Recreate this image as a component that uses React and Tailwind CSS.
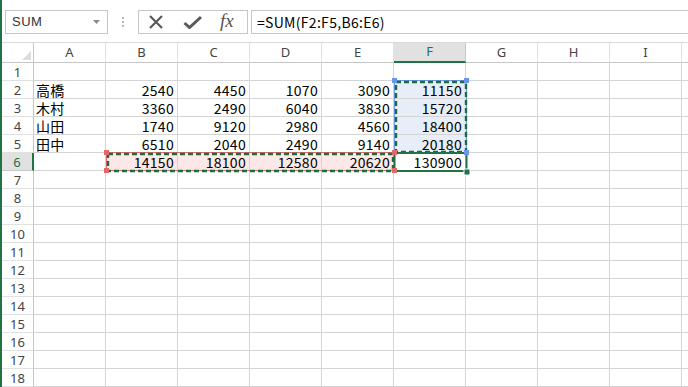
import React from 'react';

const cols = ['A', 'B', 'C', 'D', 'E', 'F', 'G', 'H', 'I'];

const data = [
  [],
  ['高橋', 2540, 4450, 1070, 3090, 11150],
  ['木村', 3360, 2490, 6040, 3830, 15720],
  ['山田', 1740, 9120, 2980, 4560, 18400],
  ['田中', 6510, 2040, 2490, 9140, 20180],
  ['', 14150, 18100, 12580, 20620, 130900],
];

const cellFont = { fontFamily: '"Noto Sans CJK JP", "Liberation Sans", sans-serif' };

function FormulaBar() {
  return (
    <div className="h-[42px] flex items-start pt-[10px] pl-[3px]">
      {/* name box */}
      <div className="w-[103px] h-[24px] border border-[#c6c6c6] flex items-center justify-between pl-[6px] pr-[7px]">
        <span className="text-[13px] text-[#333] tracking-[0.5px]" style={{ fontFamily: '"Liberation Sans", sans-serif' }}>SUM</span>
        <svg width="7" height="4" viewBox="0 0 7 4"><path d="M0 0h7L3.5 4z" fill="#8a8a8a" /></svg>
      </div>
      <div className="w-[30px] h-[24px] flex flex-col items-center justify-center gap-[2px]">
        <span className="w-[2px] h-[2px] bg-[#b8b8b8]" />
        <span className="w-[2px] h-[2px] bg-[#b8b8b8]" />
        <span className="w-[2px] h-[2px] bg-[#b8b8b8]" />
      </div>
      {/* cancel / enter / fx */}
      <div className="w-[110px] h-[24px] border border-[#c6c6c6] flex items-center pl-[9px]">
        <svg width="16" height="14" viewBox="0 0 16 14">
          <path d="M2 1l12 12M14 1L2 13" stroke="#5a5a5a" strokeWidth="2.2" />
        </svg>
        <svg width="20" height="14" viewBox="0 0 20 14" className="ml-[19px]">
          <path d="M1.5 8l5 4.5L18 2" stroke="#5a5a5a" strokeWidth="3" fill="none" />
        </svg>
        <span className="ml-[17px] text-[19px] italic text-[#555] leading-none -mt-[3px]" style={{ fontFamily: '"Liberation Serif", serif' }}>fx</span>
      </div>
      <div className="flex-1 h-[24px] border-y border-l border-[#c6c6c6] ml-[3px] flex items-center pl-[5px]">
        <span className="text-[14px] text-black tracking-[0.3px] leading-[16px]" style={cellFont}>=SUM(F2:F5,B6:E6)</span>
      </div>
    </div>
  );
}

function Grid() {
  return (
    <div className="grid grid-cols-[32px_repeat(9,72px)_10px] border-t border-[#dadada]">
      {/* header row */}
      <div className="h-[20px] border-r border-b border-[#c6c6c6] flex items-end justify-end pr-[2px] pb-[2px]">
        <svg width="9" height="9" viewBox="0 0 9 9"><path d="M9 0V9H0z" fill="#dcdcdc" /></svg>
      </div>
      {cols.map((c) => (
        <div
          key={c}
          className={
            c === 'F'
              ? 'h-[20px] bg-[#e1e1e1] border-r border-[#c6c6c6] border-b-2 border-b-[#217346] flex items-center justify-center text-[13px] text-[#217346]'
              : 'h-[20px] border-r border-b border-r-[#e1e1e1] border-b-[#c6c6c6] flex items-center justify-center text-[13px] text-[#444]'
          }
          style={{ fontFamily: '"Noto Sans", sans-serif' }}
        >
          {c}
        </div>
      ))}
      <div className="h-[20px] border-b border-[#c6c6c6]" />

      {Array.from({ length: 18 }, (_, r) => {
        const rowNum = r + 1;
        const row = data[r] || [];
        return (
          <React.Fragment key={rowNum}>
            <div
              className={
                rowNum === 6
                  ? 'h-[18px] bg-[#e1e1e1] border-r-2 border-r-[#217346] border-b border-b-[#c6c6c6] flex items-center justify-center text-[13px] leading-[16px] text-[#217346]'
                  : 'h-[18px] border-r border-b border-r-[#c6c6c6] border-b-[#e1e1e1] flex items-center justify-center text-[13px] leading-[16px] text-[#444]'
              }
              style={{ fontFamily: '"Noto Sans", sans-serif' }}
            >
              {rowNum}
            </div>
            {cols.map((c, ci) => {
              const v = row[ci];
              let bg = '';
              if (ci === 5 && rowNum >= 2 && rowNum <= 5) bg = 'bg-[#e8eef9]';
              if (ci >= 1 && ci <= 4 && rowNum === 6) bg = 'bg-[#fce8e6]';
              const isNum = typeof v === 'number';
              return (
                <div
                  key={c}
                  className={`h-[18px] border-r border-b border-[#d4d4d4] flex items-center text-[14px] text-black leading-[16px] tracking-[0.3px] ${bg} ${isNum ? 'justify-end pr-[3px]' : 'justify-start pl-[2px]'}`}
                  style={cellFont}
                >
                  {v}
                </div>
              );
            })}
            <div className="h-[18px] border-b border-[#d4d4d4]" />
          </React.Fragment>
        );
      })}
    </div>
  );
}

export default function App() {
  return (
    <div className="relative w-[688px] h-[387px] overflow-hidden bg-white flex">
      <div className="w-[2px] shrink-0 bg-[#217346]" />
      <div className="flex-1 flex flex-col">
        <FormulaBar />
        <Grid />
      </div>

      {/* range highlights */}
      <svg className="absolute left-0 top-0 pointer-events-none" width="688" height="387">
        {/* F2:F5 blue reference */}
        <rect x="394.5" y="80.5" width="72" height="72" fill="none" stroke="#6b95e8" strokeWidth="1" />
        {/* B6:E6 red reference */}
        <rect x="106.5" y="152.5" width="288" height="18" fill="none" stroke="#e06a6a" strokeWidth="1" />
        {/* marching ants */}
        <rect x="396" y="82" width="70" height="70" fill="none" stroke="#1f6b40" strokeWidth="2.4" strokeDasharray="5 3" />
        <rect x="108" y="154" width="285" height="17" fill="none" stroke="#1f6b40" strokeWidth="2.4" strokeDasharray="5 3" />
        {/* active cell F6 */}
        <rect x="394.5" y="153" width="72" height="18" fill="none" stroke="#217346" strokeWidth="2" />
        <rect x="464" y="169" width="6" height="6" fill="#217346" stroke="#fff" strokeWidth="1" />
        {/* corner handles */}
        <rect x="392" y="78" width="5" height="5" fill="#6b95e8" />
        <rect x="464" y="78" width="5" height="5" fill="#6b95e8" />
        <rect x="464" y="150" width="5" height="5" fill="#6b95e8" />
        <rect x="104" y="150" width="5" height="5" fill="#e06a6a" />
        <rect x="392" y="150" width="5" height="5" fill="#e06a6a" />
        <rect x="104" y="168" width="5" height="5" fill="#e06a6a" />
        <rect x="392" y="168" width="5" height="5" fill="#e06a6a" />
      </svg>
    </div>
  );
}
